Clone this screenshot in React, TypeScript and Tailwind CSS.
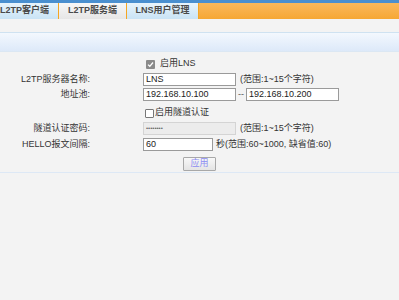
import React from "react";

const font = { fontFamily: '"Liberation Sans", "Noto Sans CJK SC", sans-serif' };

function Tab({ label, active, left }: { label: string; active?: boolean; left?: boolean }) {
  return (
    <div
      className={
        "h-full flex items-center font-bold text-[9px] text-[#4a4a4a] border-r border-[#f5a623] " +
        (left ? "justify-start " : "justify-center ") +
        (active
          ? "bg-gradient-to-b from-[#f7f7f7] to-[#e6e6e6]"
          : "bg-gradient-to-b from-[#e8f4fc] to-[#c9e3f5]")
      }
    >
      <span>{label}</span>
    </div>
  );
}

function Row({ label, children, h = "h-[15px]" }: { label?: string; children: React.ReactNode; h?: string }) {
  return (
    <div className={"flex items-center " + h}>
      <div className="w-[91px] text-right text-[9px] text-[#333] pr-[1px]">{label}</div>
      <div className="ml-[52px] flex items-center">{children}</div>
    </div>
  );
}

function Input({ value, w = "w-[93px]", disabled }: { value: string; w?: string; disabled?: boolean }) {
  return (
    <div
      className={
        "h-[13px] border flex items-center px-[2px] " +
        w +
        (disabled
          ? " bg-[#ececec] border-[#d4d4d4] text-[#666] text-[6px]"
          : " bg-white border-[#9a9a9a] text-[#222] text-[9px]")
      }
    >
      {value}
    </div>
  );
}

function Check({ checked }: { checked?: boolean }) {
  return checked ? (
    <div className="w-[9px] h-[9px] bg-[#8a8a8a] rounded-[1px] flex items-center justify-center">
      <svg width="7" height="7" viewBox="0 0 7 7">
        <path d="M1 3.6 L2.8 5.3 L6 1.5" stroke="white" strokeWidth="1.3" fill="none" />
      </svg>
    </div>
  ) : (
    <div className="w-[9px] h-[9px] bg-white border border-[#777] rounded-[1px]" />
  );
}

export default function App() {
  return (
    <div className="w-[399px] h-[300px] bg-[#f3f3f3] overflow-hidden" style={font}>
      <div className="h-[3px] bg-[#4a8fcf]" />
      <div className="h-[16px] bg-gradient-to-b from-[#fab85a] to-[#f6a733] flex">
        <div className="w-[59px]"><Tab label="L2TP客户端" left /></div>
        <div className="w-[68px]"><Tab label="L2TP服务端" active /></div>
        <div className="w-[72px]"><Tab label="LNS用户管理" /></div>
      </div>
      <div className="h-[13px] bg-[#f3f3f3]" />
      <div className="h-[20px] border-t border-[#cfe2f1] border-b border-b-[#dbe7f3] bg-gradient-to-b from-[#f3f8fe] to-[#dde9f9]" />
      <div className="pt-[5px]">
        <div className="flex items-center h-[14px]">
          <div className="ml-[146px] flex items-center gap-[5px]">
            <Check checked />
            <span className="text-[9px] text-[#333]">启用LNS</span>
          </div>
        </div>
        <div className="h-[1px]" />
        <Row label="L2TP服务器名称:">
          <Input value="LNS" />
          <span className="ml-[4px] text-[9px] text-[#333]">(范围:1~15个字符)</span>
        </Row>
        <Row label="地址池:">
          <Input value="192.168.10.100" />
          <span className="mx-[2px] text-[9px] text-[#555]">--</span>
          <Input value="192.168.10.200" />
        </Row>
        <div className="flex items-center h-[18px] pt-[4px]">
          <div className="ml-[145px] flex items-center gap-[1px]">
            <Check />
            <span className="text-[9px] text-[#333]">启用隧道认证</span>
          </div>
        </div>
        <div className="h-[1px]" />
        <Row label="隧道认证密码:">
          <Input value="••••••••" disabled />
          <span className="ml-[4px] text-[9px] text-[#333]">(范围:1~15个字符)</span>
        </Row>
        <div className="h-[1px]" />
        <Row label="HELLO报文间隔:">
          <Input value="60" w="w-[70px]" />
          <span className="ml-[3px] text-[9px] text-[#333]">秒(范围:60~1000, 缺省值:60)</span>
        </Row>
        <div className="pt-[5px] flex">
          <div className="ml-[183px] w-[33px] h-[14px] border border-[#a8a8a8] bg-gradient-to-b from-[#f8f8f8] to-[#e4e4e4] rounded-[1px] flex items-center justify-center text-[9px] text-[#8c8cf2]">
            应用
          </div>
        </div>
        <div className="h-[1px] mt-[1px] bg-[#dde8f5]" />
      </div>
    </div>
  );
}
